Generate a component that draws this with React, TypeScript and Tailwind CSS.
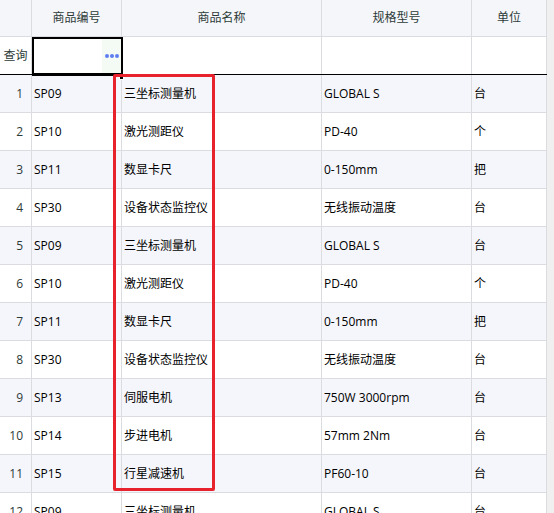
const rows = [
  ["SP09", "三坐标测量机", "GLOBAL S", "台"],
  ["SP10", "激光测距仪", "PD-40", "个"],
  ["SP11", "数显卡尺", "0-150mm", "把"],
  ["SP30", "设备状态监控仪", "无线振动温度", "台"],
  ["SP09", "三坐标测量机", "GLOBAL S", "台"],
  ["SP10", "激光测距仪", "PD-40", "个"],
  ["SP11", "数显卡尺", "0-150mm", "把"],
  ["SP30", "设备状态监控仪", "无线振动温度", "台"],
  ["SP13", "伺服电机", "750W 3000rpm", "台"],
  ["SP14", "步进电机", "57mm 2Nm", "台"],
  ["SP15", "行星减速机", "PF60-10", "台"],
  ["SP09", "三坐标测量机", "GLOBAL S", "台"],
];

const headers = ["", "商品编号", "商品名称", "规格型号", "单位"];

const cell = "border-r border-b border-[#dadce0] flex items-center";

export default function App() {
  return (
    <div
      className="relative w-[554px] h-[513px] overflow-hidden bg-white flex text-[12px]"
      style={{ fontFamily: '"Open Sans", "Noto Sans CJK SC", sans-serif' }}
    >
      <div className="w-[547px] flex flex-col">
        {/* header */}
        <div className="grid grid-cols-[32px_90px_200px_150px_75px] h-[37px] shrink-0 bg-[#f5f6fa] text-[#2d3b38]">
          {headers.map((h, i) => (
            <div key={i} className={`${cell} justify-center`}>
              {h}
            </div>
          ))}
        </div>

        {/* query row */}
        <div className="grid grid-cols-[32px_90px_200px_150px_75px] h-[38px] shrink-0 bg-white border-b border-black">
          <div className="border-r border-[#dadce0] flex items-center justify-center text-[#2d3b38]">
            查询
          </div>
          <div className="relative border-r border-[#dadce0]">
            <div className="absolute left-0 top-0 right-[-2px] bottom-[-2px] border-2 border-b-[3px] border-black flex justify-end">
              <div className="w-[19px] h-full bg-[#f4fbf4] flex items-center justify-center gap-[1px]">
                <span className="w-[4px] h-[4px] rounded-full bg-[#5f7ef2]" />
                <span className="w-[4px] h-[4px] rounded-full bg-[#5f7ef2]" />
                <span className="w-[4px] h-[4px] rounded-full bg-[#5f7ef2]" />
              </div>
            </div>
            <div className="absolute right-[-3px] bottom-[-6px] w-[5px] h-[5px] bg-black border border-white" />
          </div>
          <div className="border-r border-[#dadce0]" />
          <div className="border-r border-[#dadce0]" />
          <div className="border-r border-[#dadce0]" />
        </div>

        {/* data rows */}
        {rows.map((r, i) => (
          <div
            key={i}
            className={`grid grid-cols-[32px_90px_200px_150px_75px] h-[38px] shrink-0 ${
              i % 2 === 0 ? "bg-[#f5f6fb]" : "bg-white"
            }`}
          >
            <div className={`${cell} justify-end pr-[8px] text-[#2d3b38]`}>{i + 1}</div>
            {r.map((v, j) => (
              <div key={j} className={`${cell} pl-[2px] text-black`}>
                {v}
              </div>
            ))}
          </div>
        ))}
      </div>

      {/* scrollbar strip */}
      <div className="flex-1 bg-[#f0f0f0]" />

      {/* red annotation */}
      <div className="absolute left-[113px] top-[74px] w-[102px] h-[417px] border-[3px] border-[#e8222c] rounded-[2px] pointer-events-none" />
    </div>
  );
}
